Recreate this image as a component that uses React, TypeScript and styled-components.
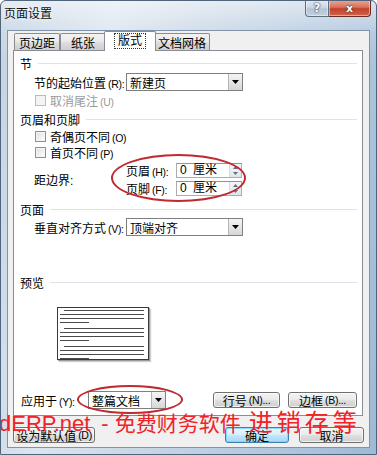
import React from 'react';
import styled, { createGlobalStyle } from 'styled-components';

const GlobalStyle = createGlobalStyle`
  html, body { margin: 0; padding: 0; background: #fff; }
  body {
    font-family: "Liberation Sans", "Noto Sans CJK SC", sans-serif;
    font-size: 12px;
    color: #000;
  }
`;

const Window = styled.div`
  position: relative;
  width: 377px;
  height: 455px;
  box-sizing: border-box;
  display: flex;
  flex-direction: column;
  border: 1px solid #50657c;
  border-radius: 6px 6px 0 0;
  overflow: hidden;
  background:
    linear-gradient(180deg, rgba(255, 255, 255, 0.55) 0px, rgba(255, 255, 255, 0.15) 30px, rgba(255, 255, 255, 0) 60px),
    linear-gradient(100deg, #c3d3e4 0%, #dbe5ef 25%, #cbd8e6 45%, #b7cbe0 70%, #9fbad6 100%);
`;

const TitleBar = styled.div`
  height: 29px;
  display: flex;
  align-items: flex-start;
  padding-left: 3px;
`;

const TitleText = styled.span`
  margin-top: 6px;
  font-size: 12px;
  line-height: 14px;
  color: #101010;
  text-shadow: 0 0 5px rgba(255, 255, 255, 0.95);
`;

const CaptionButtons = styled.div`
  margin-left: auto;
  margin-right: 5px;
  margin-top: -1px;
  display: flex;
`;

const CaptionButton = styled.div<{ $kind: 'help' | 'close' }>`
  width: ${p => (p.$kind === 'close' ? 42 : 24)}px;
  height: 17px;
  box-sizing: border-box;
  display: flex;
  align-items: center;
  justify-content: center;
  border: 1px solid ${p => (p.$kind === 'close' ? '#6a2a22' : '#5f6f82')};
  border-top: none;
  border-left-width: ${p => (p.$kind === 'close' ? 0 : 1)}px;
  border-radius: ${p => (p.$kind === 'close' ? '0 0 4px 0' : '0 0 0 4px')};
  background: ${p =>
    p.$kind === 'close'
      ? 'linear-gradient(180deg, #e9a99c 0%, #d9715c 45%, #c3412a 55%, #d0644a 100%)'
      : 'linear-gradient(180deg, #e4ebf2 0%, #ccd8e4 45%, #b4c4d5 55%, #c2d0de 100%)'};
  box-shadow: inset 0 0 0 1px rgba(255, 255, 255, 0.45);
  color: #fff;
  font-family: "DejaVu Sans", sans-serif;
  font-weight: bold;
  font-size: ${p => (p.$kind === 'close' ? 11 : 12)}px;
  text-shadow: 0 0 2px #30343a, 0 0 1px #30343a;
`;

const Body = styled.div`
  flex: 1;
  display: flex;
  padding: 0 6px 6px 6px;
`;

const Client = styled.div`
  flex: 1;
  display: flex;
  flex-direction: column;
  background: #f0f0f0;
  border: 1px solid #8093a9;
  padding: 0 6px 0 5px;
`;

const TabRow = styled.div`
  height: 20px;
  display: flex;
  align-items: flex-end;
  padding-left: 1px;
`;

const Tab = styled.div<{ $width: number; $active?: boolean }>`
  position: relative;
  z-index: ${p => (p.$active ? 2 : 1)};
  box-sizing: border-box;
  width: ${p => p.$width}px;
  height: ${p => (p.$active ? 20 : 17)}px;
  margin: ${p => (p.$active ? '0 -2px 0 -2px' : '0 0 1px 0')};
  border: 1px solid #898c95;
  border-bottom: none;
  border-radius: 2px 2px 0 0;
  background: ${p =>
    p.$active ? '#fff' : 'linear-gradient(180deg, #f2f2f2 0%, #ebebeb 45%, #dddddd 55%, #cfcfcf 100%)'};
  display: flex;
  align-items: center;
  justify-content: center;
  padding-bottom: ${p => (p.$active ? 2 : 0)}px;
  font-size: 12px;
`;

const FocusLabel = styled.span`
  outline: 1px dotted #333;
  outline-offset: 0;
  padding: 0 3px;
  line-height: 14px;
`;

const Panel = styled.div`
  flex: 1;
  margin-top: -1px;
  background: #fff;
  border: 1px solid #898c95;
  padding: 4px 5px 6px 6px;
  display: flex;
  flex-direction: column;
`;

const SectionHeader = styled.div<{ $top?: number }>`
  height: 16px;
  margin-top: ${p => p.$top ?? 0}px;
  display: flex;
  align-items: center;
  gap: 6px;
  font-size: 12px;

  &::after {
    content: '';
    flex: 1;
    height: 1px;
    background: #dde3ea;
  }
`;

const Row = styled.div<{ $top?: number; $indent?: number; $height?: number }>`
  display: flex;
  align-items: center;
  height: ${p => p.$height ?? 16}px;
  margin-top: ${p => p.$top ?? 0}px;
  margin-left: ${p => p.$indent ?? 0}px;
`;

const FieldLabel = styled.span<{ $width: number }>`
  width: ${p => p.$width}px;
  flex-shrink: 0;
  white-space: nowrap;
  font-size: 12px;
`;

/* access-key suffix such as (R): drawn small, like the original dialog font */
const Key = styled.span`
  font-family: "Liberation Sans", sans-serif;
  font-size: 10.5px;
  margin-left: 2px;
  letter-spacing: -0.3px;
`;

const Select = styled.div<{ $width: number }>`
  width: ${p => p.$width}px;
  height: 18px;
  box-sizing: border-box;
  border: 1px solid #7f7f7f;
  background: #fff;
  display: flex;
  align-items: center;
  padding-left: 3px;
  font-size: 12px;
`;

const SelectText = styled.span`
  flex: 1;
`;

const DropButton = styled.span`
  width: 14px;
  height: 100%;
  box-sizing: border-box;
  border-left: 1px solid #b5b5b5;
  background: linear-gradient(180deg, #f4f4f4 0%, #e6e6e6 50%, #d6d6d6 100%);
  display: flex;
  align-items: center;
  justify-content: center;
`;

const CheckRow = styled.label<{ $disabled?: boolean }>`
  display: flex;
  align-items: center;
  gap: 4px;
  font-size: 12px;
  color: ${p => (p.$disabled ? '#9a9a9a' : '#000')};
`;

const CheckBox = styled.span<{ $disabled?: boolean }>`
  width: 11px;
  height: 11px;
  box-sizing: border-box;
  border: 1px solid ${p => (p.$disabled ? '#bcbcbc' : '#8e8f8f')};
  background: ${p =>
    p.$disabled ? '#f4f4f4' : 'linear-gradient(135deg, #dcdcdc 0%, #f2f2f2 60%, #fff 100%)'};
  box-shadow: inset 0 0 0 1px ${p => (p.$disabled ? '#f4f4f4' : '#f5f5f5')};
`;

const MarginBlock = styled.div`
  display: flex;
  align-items: center;
  margin-top: 3px;
  margin-left: 14px;
`;

const MarginFields = styled.div`
  display: flex;
  flex-direction: column;
  gap: 3px;
`;

const MarginField = styled.div`
  display: flex;
  align-items: center;
  height: 15px;
`;

const SpinInput = styled.div`
  width: 66px;
  height: 15px;
  box-sizing: border-box;
  border: 1px solid #abadb3;
  border-top-color: #8e939c;
  display: flex;
  align-items: center;
  padding-left: 3px;
  background: #fff;
  font-size: 12px;
`;

const SpinValue = styled.span`
  flex: 1;
  line-height: 13px;
  word-spacing: 3px;
`;

const SpinButtons = styled.span`
  width: 11px;
  height: 100%;
  display: flex;
  flex-direction: column;
  background: linear-gradient(180deg, #f3f5f8 0%, #e1e6ec 100%);
  border-left: 1px solid #d5dbe2;
`;

const SpinHalf = styled.span`
  flex: 1;
  display: flex;
  align-items: center;
  justify-content: center;
`;

const PreviewPage = styled.div`
  margin-top: 17px;
  margin-left: 37px;
  width: 92px;
  height: 53px;
  box-sizing: border-box;
  border: 1px solid #3a3a3a;
  background: #fff;
  box-shadow: 1px 1px 0 #9a9a9a, 2px 2px 1px #cfcfcf;
  padding: 2px 4px 0 2px;
  display: flex;
  flex-direction: column;
  gap: 5px;
`;

const Paragraph = styled.div`
  display: flex;
  flex-direction: column;
  gap: 3px;
`;

const TextLine = styled.div<{ $kind: 'first' | 'full' | 'last' }>`
  height: 1px;
  background: #4a4a4a;
  margin-left: ${p => (p.$kind === 'first' ? 4 : 0)}px;
  width: ${p => (p.$kind === 'last' ? '29px' : 'auto')};
`;

const ApplyRow = styled.div`
  margin-top: auto;
  height: 18px;
  display: flex;
  align-items: center;
  margin-left: 1px;
`;

const ButtonGroup = styled.div`
  margin-left: auto;
  display: flex;
  gap: 8px;
`;

const Button = styled.div<{ $width: number; $focused?: boolean }>`
  width: ${p => p.$width}px;
  height: 16px;
  box-sizing: border-box;
  border: 1px solid ${p => (p.$focused ? '#3c7fb1' : '#707070')};
  border-radius: 3px;
  background: ${p =>
    p.$focused
      ? 'linear-gradient(180deg, #eaf6fd 0%, #d9f0fc 45%, #bee6fd 55%, #a7d9f5 100%)'
      : 'linear-gradient(180deg, #f2f2f2 0%, #ebebeb 45%, #dddddd 55%, #cfcfcf 100%)'};
  box-shadow: inset 0 0 0 1px ${p => (p.$focused ? 'rgba(120, 210, 255, 0.8)' : 'rgba(255, 255, 255, 0.7)')};
  display: flex;
  align-items: center;
  justify-content: center;
  font-size: 12px;
  white-space: nowrap;
`;

const Footer = styled.div`
  height: 16px;
  margin: 11px -1px 4px 0;
  display: flex;
  align-items: center;
`;

const FooterRight = styled.div`
  margin-left: auto;
  display: flex;
  gap: 10px;
`;

const Ellipse = styled.div<{ $x: number; $y: number; $w: number; $h: number }>`
  position: absolute;
  left: ${p => p.$x}px;
  top: ${p => p.$y}px;
  width: ${p => p.$w}px;
  height: ${p => p.$h}px;
  box-sizing: border-box;
  border: 2px solid #bf2a31;
  border-radius: 50%;
  pointer-events: none;
  z-index: 5;
`;

const Watermark = styled.div`
  position: absolute;
  left: -2px;
  top: 405px;
  z-index: 6;
  color: #ee2428;
  white-space: nowrap;
  line-height: 30px;
  display: flex;
  align-items: baseline;
`;

const WaterLatin = styled.span`
  font-family: "Liberation Sans", sans-serif;
  font-size: 22px;
`;

const WaterDash = styled.span`
  font-family: "Liberation Sans", sans-serif;
  font-size: 22px;
  margin: 0 6px 0 11px;
`;

const WaterCjk = styled.span<{ $size: number; $spacing?: number; $gap?: number }>`
  font-family: "Noto Sans CJK SC", sans-serif;
  font-size: ${p => p.$size}px;
  letter-spacing: ${p => p.$spacing ?? 0}px;
  margin-left: ${p => p.$gap ?? 0}px;
`;

const DownArrow = () => (
  <svg width="7" height="4" viewBox="0 0 7 4">
    <path d="M0 0h7L3.5 4z" fill="#000" />
  </svg>
);

const SpinArrow = ({ up }: { up?: boolean }) => (
  <svg width="5" height="3" viewBox="0 0 5 3">
    <path d={up ? 'M0 3h5L2.5 0z' : 'M0 0h5L2.5 3z'} fill="#5a6f8c" />
  </svg>
);

function Combo({ width, value }: { width: number; value: string }) {
  return (
    <Select $width={width}>
      <SelectText>{value}</SelectText>
      <DropButton>
        <DownArrow />
      </DropButton>
    </Select>
  );
}

function Spin({ value }: { value: string }) {
  return (
    <SpinInput>
      <SpinValue>{value}</SpinValue>
      <SpinButtons>
        <SpinHalf>
          <SpinArrow up />
        </SpinHalf>
        <SpinHalf>
          <SpinArrow />
        </SpinHalf>
      </SpinButtons>
    </SpinInput>
  );
}

const paragraphs = [0, 1, 2];

export default function App() {
  return (
    <>
      <GlobalStyle />
      <Window>
        <TitleBar>
          <TitleText>页面设置</TitleText>
          <CaptionButtons>
            <CaptionButton $kind="help">?</CaptionButton>
            <CaptionButton $kind="close">x</CaptionButton>
          </CaptionButtons>
        </TitleBar>
        <Body>
          <Client>
            <TabRow>
              <Tab $width={46}>页边距</Tab>
              <Tab $width={46}>纸张</Tab>
              <Tab $width={52} $active>
                <FocusLabel>版式</FocusLabel>
              </Tab>
              <Tab $width={56}>文档网格</Tab>
            </TabRow>
            <Panel>
              <SectionHeader>节</SectionHeader>
              <Row $top={2} $indent={14} $height={18}>
                <FieldLabel $width={92}>
                  节的起始位置<Key>(R):</Key>
                </FieldLabel>
                <Combo width={117} value="新建页" />
              </Row>
              <Row $top={1} $indent={15}>
                <CheckRow $disabled>
                  <CheckBox $disabled />
                  <span>
                    取消尾注<Key>(U)</Key>
                  </span>
                </CheckRow>
              </Row>
              <SectionHeader $top={3}>页眉和页脚</SectionHeader>
              <Row $top={1} $indent={15}>
                <CheckRow>
                  <CheckBox />
                  <span>
                    奇偶页不同<Key>(O)</Key>
                  </span>
                </CheckRow>
              </Row>
              <Row $indent={15}>
                <CheckRow>
                  <CheckBox />
                  <span>
                    首页不同<Key>(P)</Key>
                  </span>
                </CheckRow>
              </Row>
              <MarginBlock>
                <FieldLabel $width={92}>距边界:</FieldLabel>
                <MarginFields>
                  <MarginField>
                    <FieldLabel $width={50}>
                      页眉<Key>(H):</Key>
                    </FieldLabel>
                    <Spin value="0 厘米" />
                  </MarginField>
                  <MarginField>
                    <FieldLabel $width={50}>
                      页脚<Key>(F):</Key>
                    </FieldLabel>
                    <Spin value="0 厘米" />
                  </MarginField>
                </MarginFields>
              </MarginBlock>
              <SectionHeader $top={5}>页面</SectionHeader>
              <Row $top={1} $indent={14} $height={18}>
                <FieldLabel $width={92}>
                  垂直对齐方式<Key>(V):</Key>
                </FieldLabel>
                <Combo width={117} value="顶端对齐" />
              </Row>
              <SectionHeader $top={38}>预览</SectionHeader>
              <PreviewPage>
                {paragraphs.map(i => (
                  <Paragraph key={i}>
                    <TextLine $kind="first" />
                    <TextLine $kind="full" />
                    <TextLine $kind="full" />
                    <TextLine $kind="last" />
                  </Paragraph>
                ))}
              </PreviewPage>
              <ApplyRow>
                <FieldLabel $width={67}>
                  应用于<Key>(Y):</Key>
                </FieldLabel>
                <Combo width={78} value="整篇文档" />
                <ButtonGroup>
                  <Button $width={67}>
                    行号<Key>(N)...</Key>
                  </Button>
                  <Button $width={69}>
                    边框<Key>(B)...</Key>
                  </Button>
                </ButtonGroup>
              </ApplyRow>
            </Panel>
            <Footer>
              <Button $width={82}>
                设为默认值<Key>(D)</Key>
              </Button>
              <FooterRight>
                <Button $width={64} $focused>
                  确定
                </Button>
                <Button $width={65}>取消</Button>
              </FooterRight>
            </Footer>
          </Client>
        </Body>
        <Ellipse $x={110} $y={153} $w={135} $h={48} />
        <Ellipse $x={76} $y={384} $w={106} $h={29} />
        <Watermark>
          <WaterLatin>dERP.net</WaterLatin>
          <WaterDash>-</WaterDash>
          <WaterCjk $size={21}>免费财务软件</WaterCjk>
          <WaterCjk $size={24} $gap={8} $spacing={4}>
            进销存等
          </WaterCjk>
        </Watermark>
      </Window>
    </>
  );
}
